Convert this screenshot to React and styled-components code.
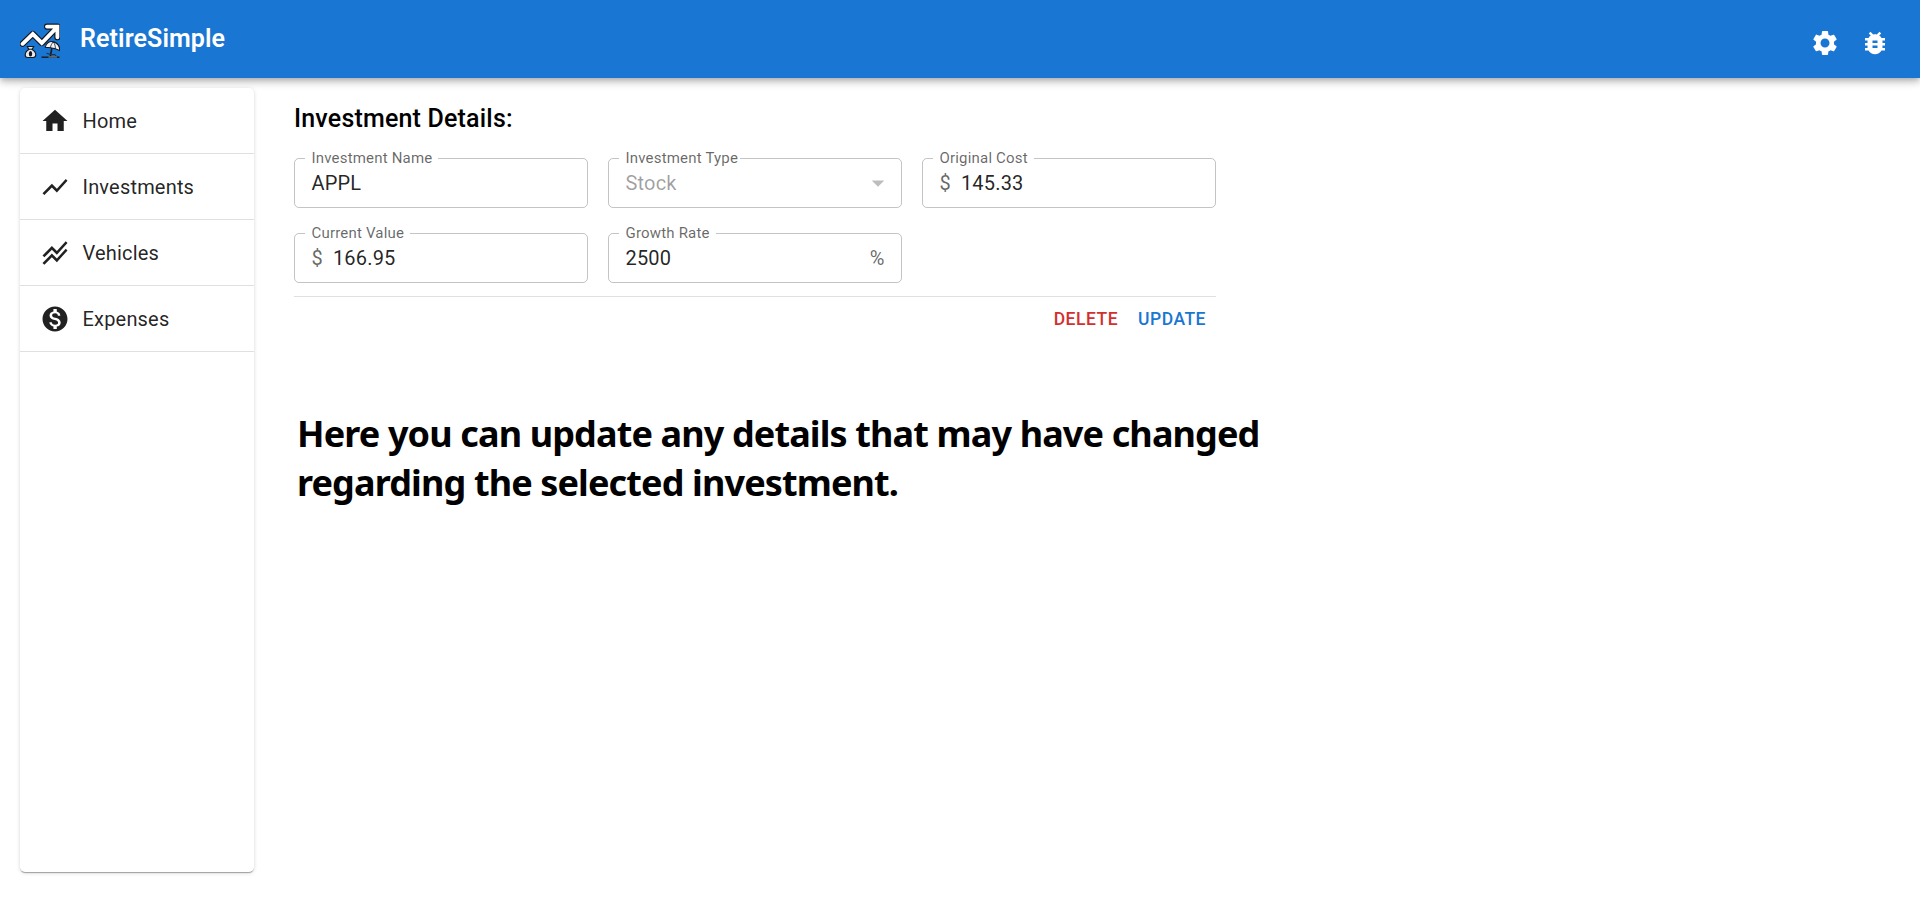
import React from "react";
import styled, { createGlobalStyle } from "styled-components";

const GlobalStyle = createGlobalStyle`
  *, *::before, *::after { box-sizing: border-box; }
  body {
    margin: 0;
    background: #fff;
    color: rgba(0, 0, 0, 0.87);
    font-family: Roboto, "Liberation Sans", sans-serif;
    font-size: 20px;
    letter-spacing: 0.00938em;
  }
`;

const Page = styled.div`
  display: flex;
  flex-direction: column;
  height: 899px;
  overflow: hidden;
`;

const AppBar = styled.header`
  display: flex;
  align-items: center;
  flex: none;
  height: 78px;
  padding: 0 30px 0 20px;
  color: #fff;
  background: #1976d2;
  box-shadow: 0 2.5px 5px -1.25px rgba(0, 0, 0, 0.2), 0 5px 6.25px rgba(0, 0, 0, 0.14),
    0 1.25px 12.5px rgba(0, 0, 0, 0.12);
`;

const Logo = styled.svg`
  display: block;
  width: 40px;
  height: 36px;
  margin-top: 4px;
`;

const Brand = styled.h1`
  flex: 1;
  margin: 0 0 0 20px;
  font-size: 25px;
  font-weight: 600;
  line-height: 40px;
  letter-spacing: 0.1px;
`;

const BarActions = styled.div`
  display: flex;
  gap: 20px;
  margin-top: 8px;
`;

const Icon = styled.svg`
  display: block;
  flex: none;
  width: 30px;
  height: 30px;
  fill: currentColor;
`;

const Body = styled.div`
  display: flex;
  align-items: flex-start;
  gap: 40px;
  padding: 10px 20px 0;
`;

const Sidebar = styled.nav`
  flex: none;
  width: 234px;
  height: 784px;
  background: #fff;
  border-radius: 5px;
  box-shadow: 0 2px 1px -1px rgba(0, 0, 0, 0.2), 0 1px 1px rgba(0, 0, 0, 0.14),
    0 1px 4px rgba(0, 0, 0, 0.14);
`;

const NavItem = styled.a`
  display: flex;
  align-items: center;
  gap: 12.5px;
  height: 66px;
  padding-left: 20px;
  border-bottom: 1px solid rgba(0, 0, 0, 0.12);
`;

const Main = styled.main`
  width: 980px;
`;

const Heading = styled.h2`
  margin: 11px 0 19px;
  font-size: 25px;
  font-weight: 500;
  line-height: 40px;
  letter-spacing: 0.0075em;
  color: #000;
`;

const Form = styled.section`
  width: 922px;
`;

const Fields = styled.div`
  display: grid;
  grid-template-columns: repeat(3, 294px);
  gap: 25px 20px;
  padding-bottom: 13px;
  border-bottom: 1px solid rgba(0, 0, 0, 0.12);
`;

const FieldBox = styled.div`
  position: relative;
  display: flex;
  align-items: center;
  height: 50px;
  padding: 0 ${(p) => (p.$select ? "7.75px" : "16.5px")} 0 16.5px;
  border: 1px solid rgba(0, 0, 0, 0.23);
  border-radius: 5px;
`;

const Label = styled.label`
  position: absolute;
  top: -10px;
  left: 10px;
  width: ${(p) => p.$width}px;
  padding-left: 6.5px;
  background: #fff;
  color: rgba(0, 0, 0, 0.6);
  font-size: 15px;
  line-height: 18px;
  white-space: nowrap;
`;

const Value = styled.span`
  flex: 1;
  color: ${(p) => (p.$disabled ? "rgba(0, 0, 0, 0.38)" : "inherit")};
`;

const Adornment = styled.span`
  margin-right: ${(p) => (p.$start ? "10px" : "0")};
  color: rgba(0, 0, 0, 0.6);
`;

const SelectArrow = styled(Icon)`
  color: rgba(0, 0, 0, 0.26);
`;

const Actions = styled.div`
  display: flex;
  justify-content: flex-end;
  padding: 4px 0;
`;

const Button = styled.button`
  height: 36px;
  padding: 0 10px;
  border: 0;
  background: none;
  color: ${(p) => (p.$danger ? "#d32f2f" : "#1976d2")};
  font: 500 17.5px Roboto, sans-serif;
  letter-spacing: 0.02857em;
  text-transform: uppercase;
`;

const Note = styled.p`
  margin: 68px 0 0 3px;
  color: #000;
  font: 700 36px/49px "Noto Sans", sans-serif;
  letter-spacing: -0.87px;
  white-space: nowrap;
`;

const paths = {
  settings:
    "M19.14 12.94c.04-.3.06-.61.06-.94 0-.32-.02-.64-.07-.94l2.03-1.58c.18-.14.23-.41.12-.61l-1.92-3.32c-.12-.22-.37-.29-.59-.22l-2.39.96c-.5-.38-1.03-.7-1.62-.94l-.36-2.54c-.04-.24-.24-.41-.48-.41h-3.84c-.24 0-.43.17-.47.41l-.36 2.54c-.59.24-1.13.57-1.62.94l-2.39-.96c-.22-.08-.47 0-.59.22L2.74 8.87c-.12.21-.08.47.12.61l2.03 1.58c-.05.3-.09.63-.09.94s.02.64.07.94l-2.03 1.58c-.18.14-.23.41-.12.61l1.92 3.32c.12.22.37.29.59.22l2.39-.96c.5.38 1.03.7 1.62.94l.36 2.54c.05.24.24.41.48.41h3.84c.24 0 .44-.17.47-.41l.36-2.54c.59-.24 1.13-.56 1.62-.94l2.39.96c.22.08.47 0 .59-.22l1.92-3.32c.12-.22.07-.47-.12-.61l-2.01-1.58zM12 15.6c-1.98 0-3.6-1.62-3.6-3.6s1.62-3.6 3.6-3.6 3.6 1.62 3.6 3.6-1.62 3.6-3.6 3.6z",
  bug: "M20 8h-2.81c-.45-.78-1.07-1.45-1.82-1.96L17 4.41 15.59 3l-2.17 2.17C12.96 5.06 12.49 5 12 5c-.49 0-.96.06-1.41.17L8.41 3 7 4.41l1.62 1.63C7.88 6.55 7.26 7.22 6.81 8H4v2h2.09c-.05.33-.09.66-.09 1v1H4v2h2v1c0 .34.04.67.09 1H4v2h2.81c1.04 1.79 2.97 3 5.19 3s4.15-1.21 5.19-3H20v-2h-2.09c.05-.33.09-.66.09-1v-1h2v-2h-2v-1c0-.34-.04-.67-.09-1H20V8zm-6 8h-4v-2h4v2zm0-4h-4v-2h4v2z",
  home: "M10 20v-6h4v6h5v-8h3L12 3 2 12h3v8z",
  line: "m3.5 18.49 6-6.01 4 4L22 6.92l-1.41-1.41-7.09 7.97-4-4L2 16.99z",
  multiline:
    "m2 19.99 7.5-7.51 4 4 7.09-7.97L22 9.92l-8.5 9.56-4-4-6 6.01-1.5-1.5zm1.5-4.5 6-6.01 4 4L22 3.92l-1.41-1.41-7.09 7.97-4-4L2 13.99l1.5 1.5z",
  money:
    "M12 2C6.48 2 2 6.48 2 12s4.48 10 10 10 10-4.48 10-10S17.52 2 12 2zm1.41 16.09V20h-2.67v-1.93c-1.71-.36-3.16-1.46-3.27-3.4h1.96c.1 1.05.82 1.87 2.65 1.87 1.96 0 2.4-.98 2.4-1.59 0-.83-.44-1.61-2.67-2.14-2.48-.6-4.18-1.62-4.18-3.67 0-1.72 1.39-2.84 3.11-3.21V4h2.67v1.95c1.86.45 2.79 1.86 2.85 3.39H14.3c-.05-1.11-.64-1.87-2.22-1.87-1.5 0-2.4.68-2.4 1.64 0 .84.65 1.39 2.67 1.91s4.18 1.39 4.18 3.91c-.01 1.83-1.38 2.83-3.12 3.16z",
};

const navItems = [
  ["Home", "home"],
  ["Investments", "line"],
  ["Vehicles", "multiline"],
  ["Expenses", "money"],
];

const Glyph = ({ name }) => (
  <Icon viewBox="0 0 24 24">
    <path d={paths[name]} />
  </Icon>
);

function Field({ label, notch, value, start, end, select }) {
  return (
    <FieldBox $select={select}>
      <Label $width={notch}>{label}</Label>
      {start && <Adornment $start>{start}</Adornment>}
      <Value $disabled={select}>{value}</Value>
      {end && <Adornment>{end}</Adornment>}
      {select && (
        <SelectArrow viewBox="0 0 24 24">
          <path d="M7 10l5 5 5-5z" />
        </SelectArrow>
      )}
    </FieldBox>
  );
}

function BrandLogo() {
  const trend = "M2.6 20.8 12.8 11 21.8 20 36.4 4.8M27 3.6H37.4V14.2";
  return (
    <Logo viewBox="0 0 40 36" fill="none">
      <path d={trend} stroke="#111820" strokeWidth="6.2" strokeLinecap="round" strokeLinejoin="round" />
      <path d={trend} stroke="#fff" strokeWidth="3.9" strokeLinecap="round" strokeLinejoin="miter" />
      <path
        d="M7.3 23.5h6.4l-1.6 3c2.2 1.3 3.7 3.4 3.7 5.3 0 1.8-1 2.7-2.6 2.7H7.7c-1.6 0-2.5-.9-2.5-2.5 0-2 1.4-4.3 3.7-5.5z"
        fill="#e8eaec"
        stroke="#111820"
        strokeWidth="1.1"
      />
      <path d="M8.4 26.2h4.2" stroke="#111820" strokeWidth="1" />
      <ellipse cx="10.5" cy="30.8" rx="1.7" ry="2.7" fill="#111820" />
      <path d="M32.5 21.5 30.3 33.6" stroke="#111820" strokeWidth="1.6" />
      <path
        d="M25.3 24.2c.6-4.4 4.4-6.5 8.5-5.3 3.8 1.1 6.3 4.6 5.8 8.6l-4.3-1.8-4.8-1-5.2-.5z"
        fill="#f4f4f4"
        stroke="#111820"
        strokeWidth="1.1"
      />
      <path d="M30.4 24.7c.4-2.3 1.4-4.2 2.8-5.8M35.3 25.7c.2-2.6-.4-4.8-2.1-6.8" stroke="#111820" strokeWidth=".8" />
      <path d="M26.5 30.2 31 31.6h4M35 31.6l1.8 2.4" stroke="#26323d" strokeWidth="1.1" />
      <path d="M21.5 34.2H39.5" stroke="#17202a" strokeWidth="1.5" />
      <path d="M28.5 34H37" stroke="#a9afb5" strokeWidth=".8" />
    </Logo>
  );
}

export default function App() {
  return (
    <Page>
      <GlobalStyle />
      <AppBar>
        <BrandLogo />
        <Brand>RetireSimple</Brand>
        <BarActions>
          <Glyph name="settings" />
          <Glyph name="bug" />
        </BarActions>
      </AppBar>
      <Body>
        <Sidebar>
          {navItems.map(([text, icon]) => (
            <NavItem key={text}>
              <Glyph name={icon} />
              <span>{text}</span>
            </NavItem>
          ))}
        </Sidebar>
        <Main>
          <Form>
            <Heading>Investment Details:</Heading>
            <Fields>
              <Field label="Investment Name" notch={133} value="APPL" />
              <Field label="Investment Type" notch={121} value="Stock" select />
              <Field label="Original Cost" notch={101} value="145.33" start="$" />
              <Field label="Current Value" notch={105} value="166.95" start="$" />
              <Field label="Growth Rate" notch={97} value="2500" end="%" />
            </Fields>
            <Actions>
              <Button $danger>Delete</Button>
              <Button>Update</Button>
            </Actions>
          </Form>
          <Note>
            Here you can update any details that may have changed
            <br />
            regarding the selected investment.
          </Note>
        </Main>
      </Body>
    </Page>
  );
}
